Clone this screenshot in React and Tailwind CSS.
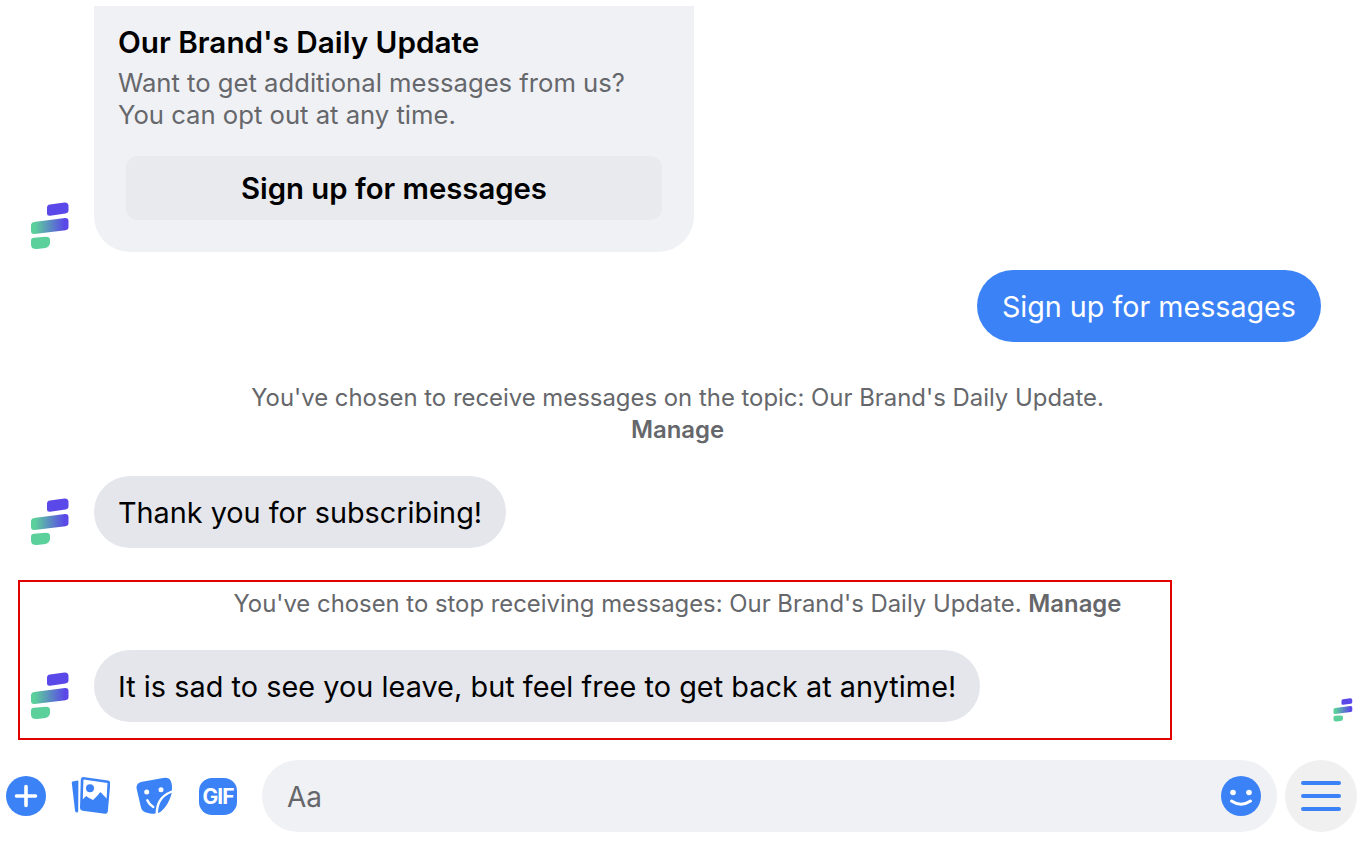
import React from 'react';

const font = { fontFamily: 'Inter, "Noto Sans", sans-serif' };

function BrandLogo({ className }) {
  const id = React.useId();
  return (
    <svg viewBox="0 0 40 48" className={className}>
      <defs>
        <linearGradient id={id} x1="0" x2="1" y1="0" y2="0">
          <stop offset="0.1" stopColor="#5bd09a" />
          <stop offset="0.9" stopColor="#5b48e8" />
        </linearGradient>
      </defs>
      <path d="M17 5.500 Q17 2.800 20 2.400 L34.500 0.400 Q38.500 0.200 38.500 4 L38.500 8.500 Q38.500 11 35.500 11.400 L20 13.700 Q17 14 17 11.500 Z" fill="#5b48e8" />
      <path d="M1 23.500 Q1 20.500 4 20 L35 16 Q38.500 15.800 38.500 19 L38.500 25 Q38.500 27.800 35.500 28.200 L4.500 32 Q1 32.300 1 29 Z" fill={`url(#${id})`} />
      <path d="M1 38.500 Q1 36 4 35.700 L16 34.800 Q20 34.800 20 38 L20 41 Q19.500 45 15.500 46 L7 47 Q1 47.300 1 42.500 Z" fill="#5bd09a" />
    </svg>
  );
}

function PlusIcon() {
  return (
    <svg viewBox="0 0 40 40" className="w-[40px] h-[40px]">
      <circle cx="20" cy="20" r="20" fill="#3b82f6" />
      <path d="M20 10.500 V29.500 M10.500 20 H29.500" stroke="#fff" strokeWidth="3.600" strokeLinecap="round" />
    </svg>
  );
}

function PhotoIcon() {
  return (
    <svg viewBox="-1 -1 40 40" className="w-[40px] h-[40px]">
      <path d="M1.500 4.500 L6.500 3.500 Q7.500 3.500 7.400 4.500 L7.200 34 Q7 36 5.500 35.500 Q4.200 35 4 33.500 L0.800 6 Q0.700 4.800 1.500 4.500 Z" fill="#3b82f6" />
      <path d="M12 0 L37 3.500 Q39.500 4 39.300 6.500 L36.800 34.500 Q36.500 37 34 36.800 L11.500 33.700 Q9 33.300 9 31 L9.800 2.500 Q10 0 12 0 Z" fill="#3b82f6" />
      <path d="M12.500 2.600 L36.500 6 L35.800 17 L12 15 Z M12 15 L36 15 L35.500 22 L29.300 15.800 L22 23 L15.200 19.500 L11.800 22.500 Z" fill="#fff" />
      <path d="M11.800 22.500 L15.200 19 L21.800 26 L29.300 15 L37 23 L36 34 L12 31 Z" fill="#3b82f6" />
      <circle cx="19" cy="11.200" r="4" fill="#3b82f6" />
    </svg>
  );
}

function StickerIcon() {
  return (
    <svg viewBox="-1 -1 40 40" className="w-[40px] h-[40px]">
      <path d="M6 5 L28 1 Q34 0 35.500 3.500 Q38 8 36.500 17 Q33.500 28 26 34.500 Q22 37.800 15 36.500 L11 35.500 Q7 34.500 6 30.500 L1.700 12 Q0.800 6.500 6 5 Z" fill="#3b82f6" />
      <circle cx="11.700" cy="15" r="2.500" fill="#fff" />
      <circle cx="26" cy="12.700" r="2.500" fill="#fff" />
      <path d="M12.300 23.300 Q14 27.500 18.300 30" stroke="#fff" strokeWidth="2.400" fill="none" strokeLinecap="round" />
      <path d="M37 14.500 Q28 18 24.500 24.500 Q22 29 21.700 37" stroke="#fff" strokeWidth="2.400" fill="none" strokeLinecap="round" />
    </svg>
  );
}

function GifIcon() {
  return (
    <div className="w-[38px] h-[37px] mx-[1px] rounded-[13px] bg-[#3b82f6] flex items-center justify-center">
      <span className="text-white text-[21px] font-bold tracking-[-1px] leading-none">GIF</span>
    </div>
  );
}

function SmileIcon() {
  return (
    <svg viewBox="0 0 40 40" className="w-[40px] h-[40px]">
      <circle cx="20" cy="20" r="20" fill="#3b82f6" />
      <circle cx="12" cy="16.500" r="2.800" fill="#fff" />
      <circle cx="28" cy="16.500" r="2.800" fill="#fff" />
      <path d="M10.500 25 Q20 31.500 29.500 25" stroke="#fff" strokeWidth="3" fill="none" strokeLinecap="round" />
    </svg>
  );
}

function Avatar() {
  return <BrandLogo className="w-[40px] h-[48px] shrink-0 mb-[2px]" />;
}

function Bubble({ children, className = '' }) {
  return (
    <div className={`ml-[24px] h-[72px] px-[24px] pt-[2px] rounded-[36px] bg-[#e4e6eb] flex items-center text-[28.800px] text-black whitespace-nowrap ${className}`}>
      {children}
    </div>
  );
}

export default function App() {
  return (
    <div className="w-[1360px] h-[852px] bg-white overflow-hidden flex flex-col pt-[6px]" style={font}>
      {/* Opt-in card */}
      <div className="flex items-end pl-[30px]">
        <Avatar />
        <div className="ml-[24px] w-[600px] h-[246px] bg-[#f0f1f5] rounded-b-[36px] px-[24px] pt-[19px]">
          <h2 className="text-[29.700px] leading-[34px] font-semibold text-black">Our Brand's Daily Update</h2>
          <p className="mt-[8px] text-[25.650px] leading-[32px] text-[#65676b]">
            Want to get additional messages from us?<br />You can opt out at any time.
          </p>
          <div className="mx-[8px] mt-[25px] h-[64px] pt-[2px] rounded-[12px] bg-[#e9eaed] flex items-center justify-center text-[29.300px] font-semibold text-black">
            Sign up for messages
          </div>
        </div>
      </div>

      <div className="mt-[18px] flex justify-end pr-[39px]">
        <div className="h-[72px] px-[25px] pt-[2px] rounded-[36px] bg-[#3b82f6] flex items-center text-[28.700px] text-white">
          Sign up for messages
        </div>
      </div>

      <div className="mt-[40px] text-center text-[23.900px] leading-[32px] text-[#65676b] pr-[5px]">
        <p>You've chosen to receive messages on the topic: Our Brand's Daily Update.</p>
        <p className="font-semibold">Manage</p>
      </div>

      <div className="mt-[30px] flex items-end pl-[30px]">
        <Avatar />
        <Bubble>Thank you for subscribing!</Bubble>
      </div>

      {/* Highlighted exchange */}
      <div className="mt-[32px] flex items-end">
        <div className="ml-[18px] w-[1154px] h-[160px] border-2 border-[#e00000] pl-[10px] flex flex-col shrink-0">
          <p className="mt-[6px] ml-[203.500px] text-[23.870px] leading-[32px] text-[#65676b] whitespace-nowrap">
            You've chosen to stop receiving messages: Our Brand's Daily Update. <span className="font-semibold">Manage</span>
          </p>
          <div className="mt-[30px] flex items-end">
            <Avatar />
            <Bubble className="tracking-[0.05px]">It is sad to see you leave, but feel free to get back at anytime!</Bubble>
          </div>
        </div>
        <BrandLogo className="ml-[161px] mb-[18px] w-[20px] h-[24px] shrink-0" />
      </div>

      {/* Composer */}
      <div className="mt-[20px] flex items-center pl-[6px] pr-[3px]">
        <div className="flex items-center gap-[24px]">
          <PlusIcon />
          <PhotoIcon />
          <StickerIcon />
          <GifIcon />
        </div>
        <div className="ml-[24px] w-[1015px] h-[72px] rounded-[36px] bg-[#f0f1f5] flex items-center justify-between pl-[25px] pr-[16px]">
          <span className="text-[28px] pt-[1px] text-[#65676b]">Aa</span>
          <SmileIcon />
        </div>
        <div className="ml-[8px] w-[72px] h-[72px] rounded-full bg-[#f0f0f0] flex flex-col items-center justify-center gap-[9px]">
          <div className="w-[40px] h-[4px] rounded-full bg-[#3b82f6]" />
          <div className="w-[40px] h-[4px] rounded-full bg-[#3b82f6]" />
          <div className="w-[40px] h-[4px] rounded-full bg-[#3b82f6]" />
        </div>
      </div>
    </div>
  );
}
